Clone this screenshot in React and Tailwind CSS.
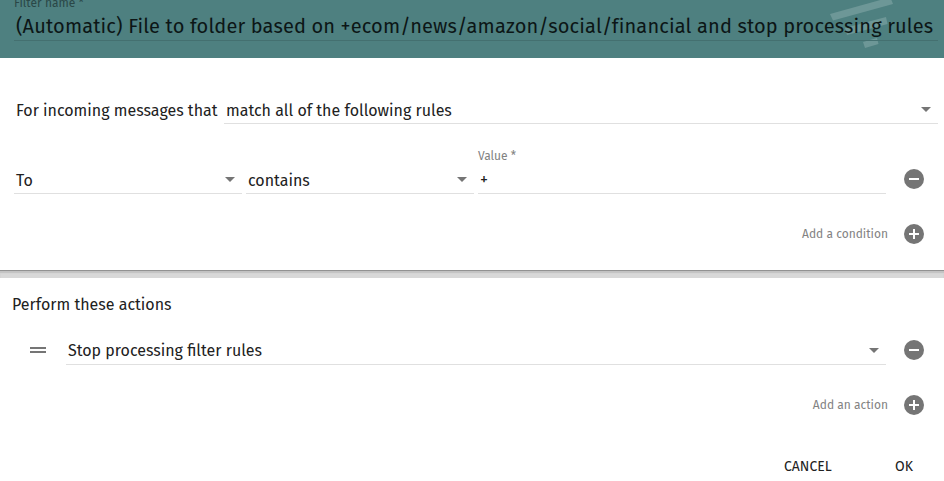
import React from 'react'

const Caret = () => (
  <svg className="w-[10px] h-[5px] shrink-0 text-[#757575]" viewBox="0 0 10 5" fill="currentColor">
    <path d="M0 0h10L5 5z" />
  </svg>
)

const RoundButton = ({ plus }) => (
  <button className="w-5 h-5 shrink-0 cursor-pointer" aria-label={plus ? 'Add' : 'Remove'}>
    <svg className="w-5 h-5 block" viewBox="0 0 20 20">
      <circle cx="10" cy="10" r="10" fill="#757575" />
      <path d={plus ? 'M5 9h4V5h2v4h4v2h-4v4H9v-4H5z' : 'M5 9h10v2H5z'} fill="#fff" />
    </svg>
  </button>
)

const Select = ({ children, className = '' }) => (
  <div className={`h-[27px] border-b border-[#e0e0e0] flex justify-between pl-0.5 pr-[7px] ${className}`}>
    <span className="leading-[26px] whitespace-nowrap">{children}</span>
    <span className="flex pt-[10px]"><Caret /></span>
  </div>
)

const Header = () => (
  <header className="relative h-[58px] bg-[#4e8080] overflow-hidden pl-[14px] pr-[6px]">
    <svg className="absolute left-[824px] top-0 w-[80px] h-[58px]" viewBox="824 0 80 58" fill="#fff" fillOpacity="0.18">
      <path d="M830 14L884 -1L891 -1L893 4L833 20.5z" />
      <path d="M845 28L886 17L887.5 24L847 35z" />
      <path d="M863 42L877 38L878.5 44L865 48z" />
    </svg>
    <div className="relative h-[41px] border-b border-[#447070]">
      <div className="h-[13px] flex items-end">
        <label className="text-[12px] leading-[20px] text-[#2a4747] whitespace-nowrap">Filter name *</label>
      </div>
      <div className="pl-0.5 text-[20px] leading-[26px] tracking-[0.145px] text-[#0c1616] whitespace-nowrap">
        (Automatic) File to folder based on +ecom/news/amazon/social/financial and stop processing rules
      </div>
    </div>
  </header>
)

const Conditions = () => (
  <section className="h-[212px]">
    <div className="pt-[39px] pl-4 pr-[6px] flex">
      <div className="w-[208px] leading-[28px] h-[27px] whitespace-nowrap">For incoming messages that</div>
      <Select className="flex-1 [&>span:first-child]:leading-[28px]">match all of the following rules</Select>
    </div>
    <div className="pt-[25px] pl-[14px] pr-5 flex items-end">
      <Select className="w-[228px] mr-1 [&>span:first-child]:leading-[28px]">To</Select>
      <Select className="w-[228px] mr-1 [&>span:first-child]:leading-[28px]">contains</Select>
      <div className="w-[408px] h-[45px] border-b border-[#e0e0e0]">
        <div className="text-[12px] leading-[14px] text-[#828282]">Value *</div>
        <div className="pl-0.5 pt-[5px] text-[16px] leading-[24px]">+</div>
      </div>
      <div className="ml-[18px] pb-[5px] flex"><RoundButton /></div>
    </div>
    <div className="pt-[30px] pr-5 flex justify-end items-center gap-4">
      <span className="text-[12px] leading-5 text-[#828282]">Add a condition</span>
      <RoundButton plus />
    </div>
  </section>
)

const Actions = () => (
  <section className="flex-1 pt-[14px]">
    <h2 className="pl-3 leading-[26px]">Perform these actions</h2>
    <div className="pt-5 pl-[30px] pr-5 flex">
      <div className="w-9 pt-[9px] flex flex-col gap-0.5">
        <div className="w-4 h-0.5 bg-[#757575]" />
        <div className="w-4 h-0.5 bg-[#757575]" />
      </div>
      <Select className="w-[820px]">Stop processing filter rules</Select>
      <div className="ml-[18px] pt-[2px] flex"><RoundButton /></div>
    </div>
    <div className="pt-[30px] pr-5 flex justify-end items-center gap-4">
      <span className="text-[12px] leading-5 text-[#828282]">Add an action</span>
      <RoundButton plus />
    </div>
    <div className="pt-[42px] flex justify-end text-[14px] leading-5">
      <button className="w-[48px] mr-[63px] text-left whitespace-nowrap">CANCEL</button>
      <button className="w-[18px] mr-[31px] text-left whitespace-nowrap">OK</button>
    </div>
  </section>
)

const App = () => (
  <div className="w-[944px] h-[481px] overflow-hidden flex flex-col bg-white text-[16px] text-[#212121] font-['Fira_Sans','Noto_Sans',sans-serif]">
    <Header />
    <Conditions />
    <div className="h-2 shrink-0 bg-[#d8d8d8] border-t border-[#929292] shadow-[inset_0_2px_1px_#c2c2c2]" />
    <Actions />
  </div>
)

export default App
